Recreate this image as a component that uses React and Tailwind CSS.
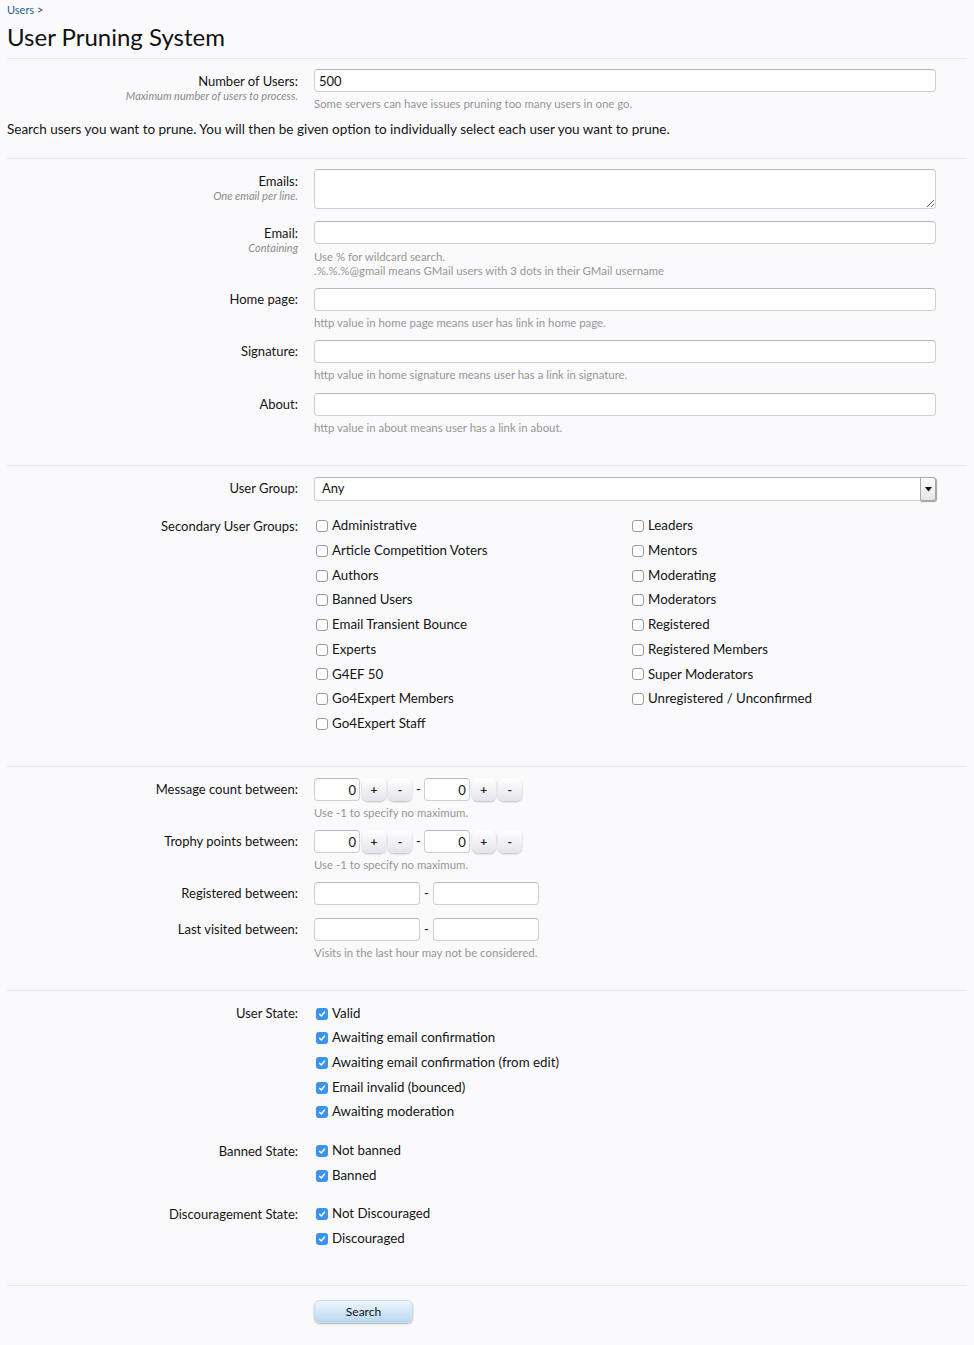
import { useState } from "react";

const font = { fontFamily: "Lato, 'Open Sans', sans-serif" };

const secondaryLeft = [
  "Administrative",
  "Article Competition Voters",
  "Authors",
  "Banned Users",
  "Email Transient Bounce",
  "Experts",
  "G4EF 50",
  "Go4Expert Members",
  "Go4Expert Staff",
];
const secondaryRight = [
  "Leaders",
  "Mentors",
  "Moderating",
  "Moderators",
  "Registered",
  "Registered Members",
  "Super Moderators",
  "Unregistered / Unconfirmed",
];

function Box({ checked }) {
  if (checked) {
    return (
      <span className="flex h-[12px] w-[12px] shrink-0 items-center justify-center rounded-[3px] bg-[#3c93ea]">
        <svg width="8" height="8" viewBox="0 0 8 8">
          <path d="M1.5 4.2 L3.3 6 L6.6 2" fill="none" stroke="#fff" strokeWidth="1.4" strokeLinecap="round" strokeLinejoin="round" />
        </svg>
      </span>
    );
  }
  return <span className="h-[12px] w-[12px] shrink-0 rounded-[3px] border border-[#9a9a9a] bg-white" />;
}

function Check({ label, checked }) {
  return (
    <div className="flex h-[24.7px] items-center gap-[4px] pl-[2px] text-[13.3px] text-[#141414]">
      <Box checked={checked} />
      <span>{label}</span>
    </div>
  );
}

function Row({ label, hint, children, className = "", labelPad = "pt-[3px]" }) {
  return (
    <div className={`flex ${className}`}>
      <div className={`w-[291px] shrink-0 text-right ${labelPad}`}>
        <div className="text-[13px] leading-[17px] text-[#141414]">{label}</div>
        {hint && <div className="text-[11px] italic leading-[12px] text-[#8a8a8a]">{hint}</div>}
      </div>
      <div className="ml-[16px] w-[622px]">{children}</div>
    </div>
  );
}

function TextInput({ value = "", className = "w-full" }) {
  return (
    <input
      defaultValue={value}
      className={`block h-[23px] rounded-[4px] border border-[#cfcfcf] border-t-[#b8b8b8] bg-white px-[4px] text-[13px] text-[#141414] outline-none ${className}`}
      style={font}
    />
  );
}

function Hint({ children, className = "mt-[5px]" }) {
  return <div className={`${className} text-[11.4px] leading-[14px] text-[#969696]`}>{children}</div>;
}

function SpinButton({ children }) {
  return (
    <button className="ml-[2px] h-[23px] w-[24px] rounded-[6px] bg-gradient-to-b from-white to-[#e4e4ec] text-[12px] font-bold leading-none text-[#222] shadow-[0_1px_2px_rgba(0,0,0,0.25)]">
      {children}
    </button>
  );
}

function Spinner() {
  return (
    <div className="flex items-center">
      <input
        defaultValue="0"
        className="block h-[23px] w-[46px] rounded-[4px] border border-[#cfcfcf] border-t-[#b8b8b8] bg-white pl-[4px] pr-[3px] text-right text-[13px] outline-none"
        style={font}
      />
      <SpinButton>+</SpinButton>
      <SpinButton>-</SpinButton>
    </div>
  );
}

function Divider() {
  return <div className="h-px bg-[#d7edfc]" />;
}

export default function App() {
  const [group, setGroup] = useState("Any");

  return (
    <div className="min-h-[1345px] bg-[#fafafc] px-[7px] text-[#141414]" style={font}>
      <div className="pt-[3px] text-[11px] leading-[14px] text-[#2b5a8a]">
        Users <span className="text-[#444]">&gt;</span>
      </div>
      <h1 className="mt-[5px] text-[24px] leading-[30px] text-[#111]">User Pruning System</h1>
      <div className="mt-[6px]">
        <Divider />
      </div>

      <Row label="Number of Users:" hint="Maximum number of users to process." className="mt-[10px]" labelPad="pt-[4px]">
        <TextInput value="500" />
        <Hint>Some servers can have issues pruning too many users in one go.</Hint>
      </Row>
      <p className="mt-[10px] text-[13.5px] leading-[17px]">
        Search users you want to prune. You will then be given option to individually select each user you want to prune.
      </p>
      <div className="mt-[20px]">
        <Divider />
      </div>

      <Row label="Emails:" hint="One email per line." className="mt-[10px]" labelPad="pt-[4px]">
        <textarea className="block h-[40px] w-full resize-y rounded-[4px] border border-[#cfcfcf] border-t-[#b8b8b8] bg-white outline-none" />
      </Row>
      <Row label="Email:" hint="Containing" className="mt-[12px]" labelPad="pt-[4px]">
        <TextInput />
        <Hint className="mt-[6px]">
          Use % for wildcard search.
          <br />
          .%.%.%@gmail means GMail users with 3 dots in their GMail username
        </Hint>
      </Row>
      <Row label="Home page:" className="mt-[10px]">
        <TextInput />
        <Hint>http value in home page means user has link in home page.</Hint>
      </Row>
      <Row label="Signature:" className="mt-[10px]">
        <TextInput />
        <Hint>http value in home signature means user has a link in signature.</Hint>
      </Row>
      <Row label="About:" className="mt-[11px]">
        <TextInput />
        <Hint>http value in about means user has a link in about.</Hint>
      </Row>
      <div className="mt-[30px]">
        <Divider />
      </div>

      <Row label="User Group:" className="mt-[11px]">
        <div className="relative flex h-[24px] items-center rounded-[3px] border border-[#cfcfcf] border-t-[#b8b8b8] bg-white pl-[7px] text-[13px]">
          <span>{group}</span>
          <select
            value={group}
            onChange={(e) => setGroup(e.target.value)}
            className="absolute inset-0 opacity-0"
          >
            <option>Any</option>
          </select>
          <span className="absolute right-[-1px] top-[-1px] flex h-[24px] w-[16px] items-center justify-center rounded-r-[3px] border border-[#a8a8a8] bg-gradient-to-b from-white to-[#e6e6e6] shadow-[1px_1px_1px_rgba(0,0,0,0.35)]">
            <svg width="7" height="5" viewBox="0 0 7 5">
              <path d="M0 0 H7 L3.5 4.5 Z" fill="#111" />
            </svg>
          </span>
        </div>
      </Row>
      <Row label="Secondary User Groups:" className="mt-[13px]" labelPad="pt-[4px]">
        <div className="grid grid-cols-2">
          <div>
            {secondaryLeft.map((g) => (
              <Check key={g} label={g} />
            ))}
          </div>
          <div className="pl-[5px]">
            {secondaryRight.map((g) => (
              <Check key={g} label={g} />
            ))}
          </div>
        </div>
      </Row>
      <div className="mt-[30px]">
        <Divider />
      </div>

      <Row label="Message count between:" className="mt-[11px]">
        <div className="flex items-center">
          <Spinner />
          <span className="ml-[4px] mr-[3px] text-[13px]">-</span>
          <Spinner />
        </div>
        <Hint>Use -1 to specify no maximum.</Hint>
      </Row>
      <Row label="Trophy points between:" className="mt-[10px]">
        <div className="flex items-center">
          <Spinner />
          <span className="ml-[4px] mr-[3px] text-[13px]">-</span>
          <Spinner />
        </div>
        <Hint>Use -1 to specify no maximum.</Hint>
      </Row>
      <Row label="Registered between:" className="mt-[10px]">
        <div className="flex items-center">
          <TextInput className="w-[106px]" />
          <span className="mx-[4px] text-[13px]">-</span>
          <TextInput className="w-[106px]" />
        </div>
      </Row>
      <Row label="Last visited between:" className="mt-[13px]">
        <div className="flex items-center">
          <TextInput className="w-[106px]" />
          <span className="mx-[4px] text-[13px]">-</span>
          <TextInput className="w-[106px]" />
        </div>
        <Hint>Visits in the last hour may not be considered.</Hint>
      </Row>
      <div className="mt-[30px]">
        <Divider />
      </div>

      <Row label="User State:" className="mt-[10px]" labelPad="pt-[4px]">
        <Check label="Valid" checked />
        <Check label="Awaiting email confirmation" checked />
        <Check label="Awaiting email confirmation (from edit)" checked />
        <Check label="Email invalid (bounced)" checked />
        <Check label="Awaiting moderation" checked />
      </Row>
      <Row label="Banned State:" className="mt-[14px]" labelPad="pt-[4px]">
        <Check label="Not banned" checked />
        <Check label="Banned" checked />
      </Row>
      <Row label="Discouragement State:" className="mt-[14px]" labelPad="pt-[4px]">
        <Check label="Not Discouraged" checked />
        <Check label="Discouraged" checked />
      </Row>
      <div className="mt-[34px]">
        <Divider />
      </div>

      <Row label="" className="mt-[14px] pb-[22px]" labelPad="">
        <button className="block h-[23px] w-[99px] rounded-[6px] border border-[#c6dcec] bg-gradient-to-b from-[#eef6fd] to-[#b9d8ef] text-[12px] leading-none text-[#111] shadow-[0_1px_2px_rgba(0,0,0,0.3)]">
          Search
        </button>
      </Row>
    </div>
  );
}
